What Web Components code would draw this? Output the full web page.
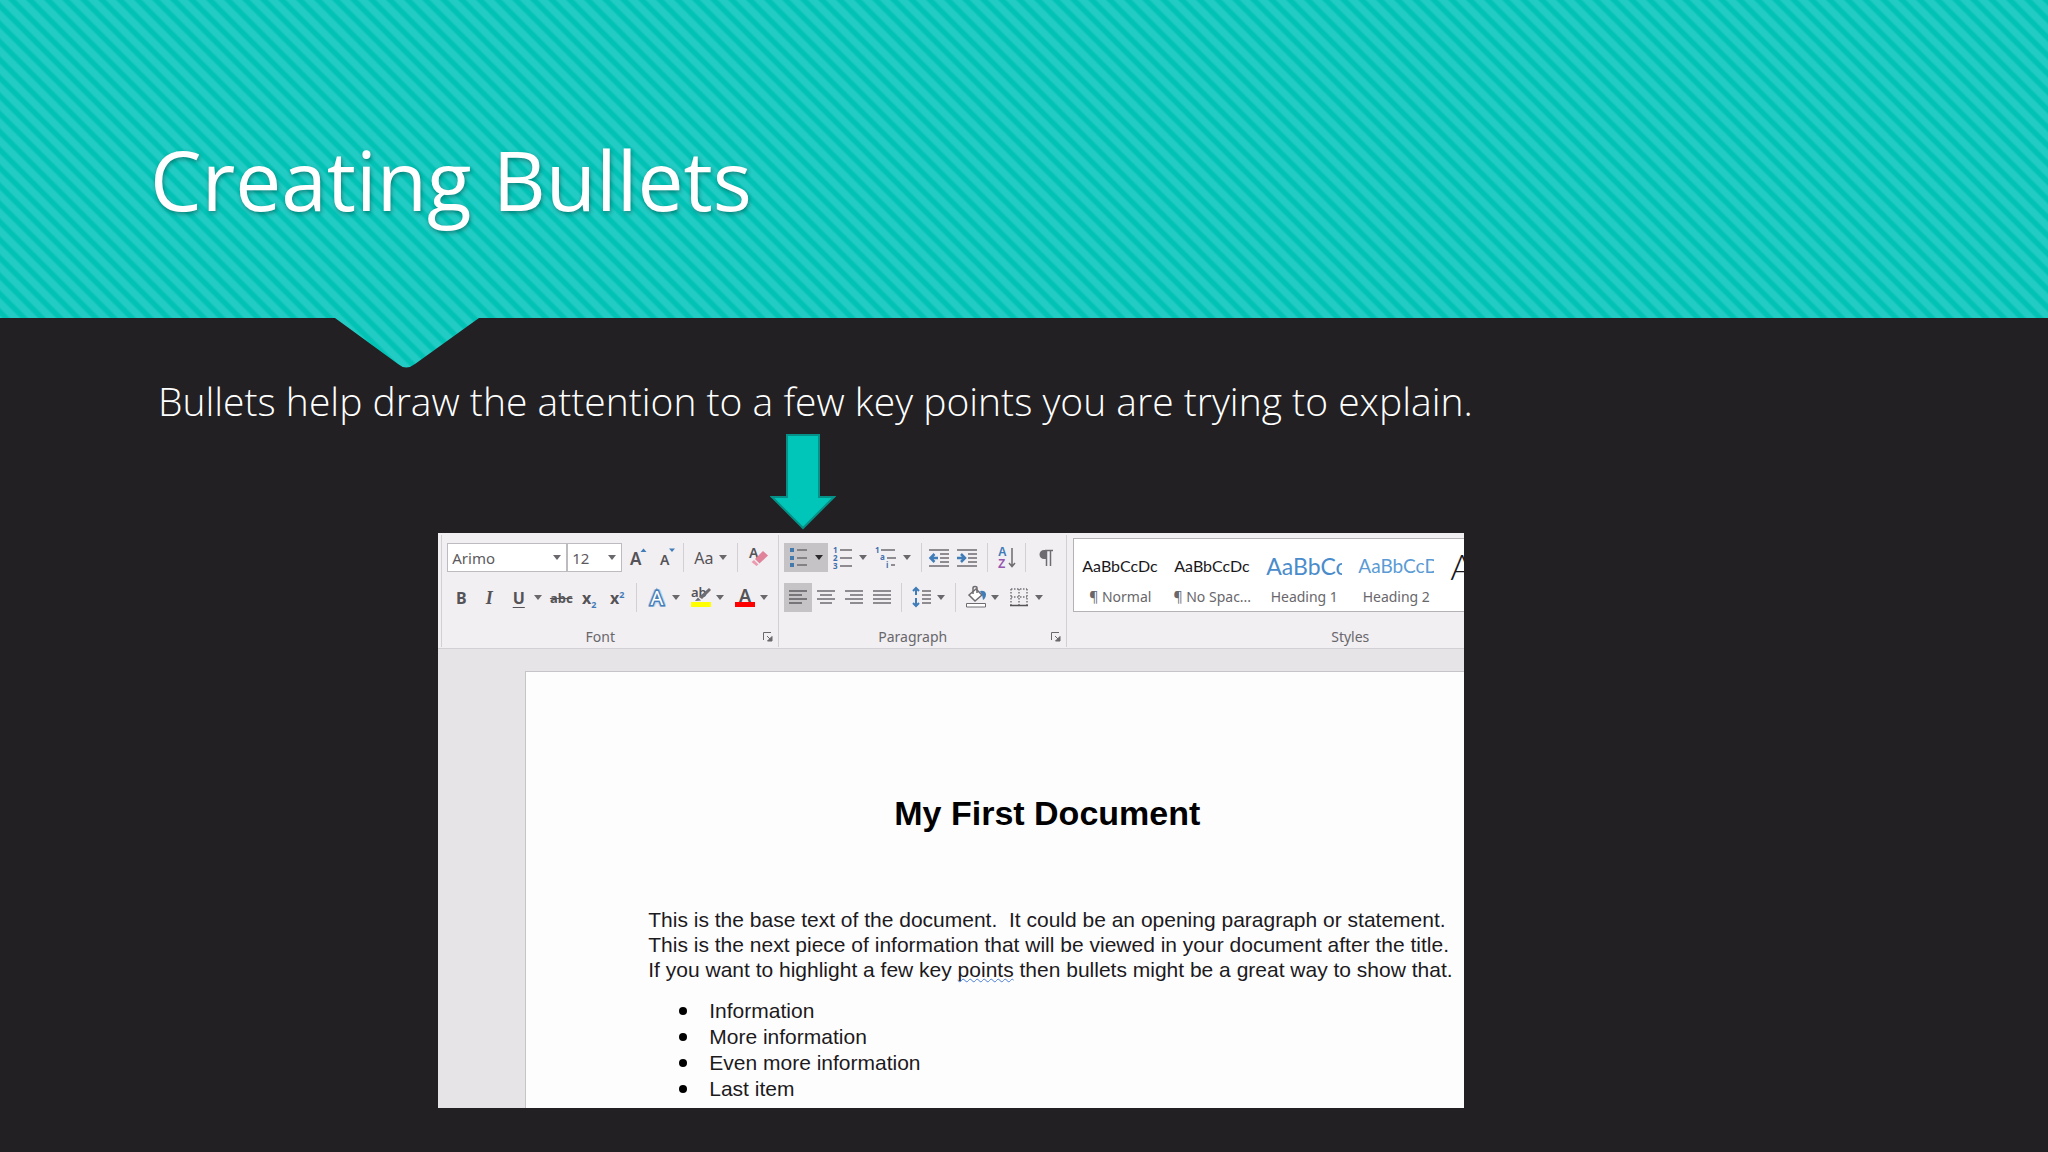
<!DOCTYPE html>
<html lang="en">
<head>
<meta charset="utf-8">
<title>Creating Bullets</title>
<style>
  html, body {
    margin: 0;
    min-height: 100%;
    background: #222023;
  }

  body {
    font-family: "Noto Sans", "Open Sans", sans-serif;
  }

  li {
    padding-left: 8px;
  }

  li::marker {
    color: #000;
    font-size: 25px;
  }
</style>
</head>
<body>
<lesson-slide>
  <slide-header slot="header">Creating Bullets</slide-header>
  <p>Bullets help draw the attention to a few key points you are trying to explain.</p>
  <down-arrow></down-arrow>
  <word-window>
    <word-ribbon slot="ribbon"></word-ribbon>
    <word-page>
      <span slot="title">My First Document</span>
      <span>This is the base text of the document.&nbsp; It could be an opening paragraph or statement.</span>
      <span>This is the next piece of information that will be viewed in your document after the title.</span>
      <span>If you want to highlight a few key <word-squiggle>points</word-squiggle> then bullets might be a great way to show that.</span>
      <ul slot="list">
        <li>Information</li>
        <li>More information</li>
        <li>Even more information</li>
        <li>Last item</li>
      </ul>
    </word-page>
  </word-window>
</lesson-slide>

<script>
// Attach an open shadow root and fill it
class BaseElement extends HTMLElement {
  constructor() {
    super();
    this.attachShadow({ mode: 'open' });
  }

  connectedCallback() {
    this.shadowRoot.innerHTML = this.template();
  }
}

class LessonSlide extends BaseElement {
  template() {
    return `
      <style>
        :host {
          display: block;
          color: #fff;
        }

        main {
          padding: 55px 0 40px;
        }

        ::slotted(p) {
          margin: 0 0 0 158px;
          font: 300 39px/56px "Open Sans", "Noto Sans", sans-serif;
        }

        ::slotted(down-arrow) {
          margin: 5px 0 2px 37.6%;
        }

        ::slotted(word-window) {
          margin-left: 21.4%;
          width: 50.1%;
        }
      </style>
      <slot name="header"></slot>
      <main><slot></slot></main>
    `;
  }
}

// Striped banner with a pointer under the title
class SlideHeader extends BaseElement {
  template() {
    return `
      <style>
        :host {
          --stripes: linear-gradient(45deg, #22cbc3 10%, #02c2b5 19% 31%, #22cbc3 40% 60%, #02c2b5 69% 81%, #22cbc3 90%);
          display: block;
          position: relative;
          padding: 119px 150px 79px;
          background: var(--stripes) 0 -3px / 18px 18px;
        }

        :host::after {
          content: "";
          position: absolute;
          top: 100%;
          left: 335px;
          width: 144px;
          height: 50px;
          background: var(--stripes) -335px -321px / 18px 18px;
          clip-path: path("M0 0H144L80 46Q71 53 63 46Z");
        }

        h1 {
          margin: 0;
          font: 400 82px/120px "Open Sans", "Noto Sans", sans-serif;
          text-shadow: 1px 2px 4px rgba(0, 0, 0, 0.35);
        }
      </style>
      <h1><slot></slot></h1>
    `;
  }
}

class DownArrow extends BaseElement {
  template() {
    return `
      <style>
        :host { display: block; }
        svg { display: block; }
      </style>
      <svg width="66" height="97" viewBox="0 0 66 97" fill="#00c6b9" stroke="#069188" stroke-width="2">
        <path d="M17 1H49V63H64L33 94L2 63H17Z"/>
      </svg>
    `;
  }
}

class WordWindow extends BaseElement {
  template() {
    return `
      <style>
        :host {
          display: block;
          overflow: hidden;
          background: #e6e4e7;
          color: #000;
        }

        .canvas {
          padding: 22px 0 0 87px;
        }
      </style>
      <slot name="ribbon"></slot>
      <div class="canvas"><slot></slot></div>
    `;
  }
}

class WordPage extends BaseElement {
  template() {
    return `
      <style>
        :host {
          display: block;
          padding: 117px 0 0 122px;
          border: 1px solid #c6c4c8;
          border-width: 1px 0 0 1px;
          background: #fefdfe;
          font: 21px/25px "Liberation Sans", Arial, sans-serif;
          color: #1c1a1d;
          white-space: nowrap;
        }

        h2 {
          margin: 0 0 70px 246px;
          font-size: 34px;
          line-height: 48px;
          color: #000;
        }

        p {
          display: flex;
          flex-direction: column;
          margin: 0 0 15px;
        }

        ::slotted(ul) {
          margin: 0;
          padding: 0 0 7px 53px;
          line-height: 25px;
        }
      </style>
      <h2><slot name="title"></slot></h2>
      <p><slot></slot></p>
      <slot name="list"></slot>
    `;
  }
}

class WordSquiggle extends BaseElement {
  template() {
    return `
      <style>
        :host {
          text-decoration: underline wavy #4a7fd6 1px;
          text-underline-offset: 1px;
          text-decoration-skip-ink: none;
        }
      </style><slot></slot>`;
  }
}

// Ribbon button; "menu" adds the caret, "active" the pressed look
class RibbonButton extends BaseElement {
  template() {
    const caret = this.hasAttribute('menu')
      ? '<svg class="caret" width="8" height="5" viewBox="0 0 8 5"><path d="M0 0H8L4 5Z"/></svg>'
      : '';
    return `
      <style>
        :host {
          display: block;
          width: 28px;
        }

        :host([menu]) {
          width: 44px;
        }

        button {
          display: flex;
          align-items: center;
          width: 100%;
          height: 29px;
          padding: 0;
          border: 0;
          background: none;
          color: #555357;
          font: 700 16px/24px "Noto Sans", "Open Sans", sans-serif;
        }

        :host([active]) button {
          background: #c5c3c6;
        }

        .icon {
          display: flex;
          flex: 1;
          justify-content: center;
        }

        .caret {
          flex: none;
          margin-right: 5px;
          fill: #6a686c;
        }

        :host([active]) .caret {
          fill: #2c2a2e;
        }
      </style>
      <button type="button" aria-label="${this.getAttribute('label')}">
        <span class="icon"><slot></slot></span>${caret}
      </button>
    `;
  }
}

class RibbonSelect extends BaseElement {
  template() {
    return `
      <style>
        :host {
          display: grid;
          align-items: center;
        }

        select, svg {
          grid-area: 1 / 1;
        }

        select {
          appearance: none;
          box-sizing: border-box;
          width: 100%;
          height: 29px;
          margin: 0;
          padding: 0 4px;
          border: 1px solid #bdbbbf;
          border-radius: 0;
          background: #fff;
          color: #5c5a5e;
          font: 15px/24px "Noto Sans", "Open Sans", sans-serif;
        }

        svg {
          justify-self: end;
          margin-right: 6px;
          fill: #6a686c;
          pointer-events: none;
        }
      </style>
      <select aria-label="${this.getAttribute('label')}">
        <option>${this.getAttribute('value')}</option>
      </select>
      <svg width="8" height="5" viewBox="0 0 8 5"><path d="M0 0H8L4 5Z"/></svg>
    `;
  }
}

class RibbonSeparator extends BaseElement {
  template() {
    return `
      <style>
        :host {
          display: flex;
          justify-content: center;
          width: 10px;
          height: 29px;
        }

        div { border-left: 1px solid #d2d0d4; }
      </style>
      <div></div>
    `;
  }
}

class RibbonGroup extends BaseElement {
  template() {
    const launcher = this.hasAttribute('launcher')
      ? `<button type="button" aria-label="${this.getAttribute('name')} settings">
          <svg width="10" height="10" viewBox="0 0 10 10" fill="none" stroke="#6a686c">
            <path d="M.5 8V.5H8M4 4L8 8"/><path d="M9 4.500V9H4.500Z" fill="#6a686c"/>
          </svg>
        </button>`
      : '';
    return `
      <style>
        :host {
          display: block;
          flex: none;
          box-sizing: border-box;
          padding: 8px 0 0 5px;
          border-right: 1px solid #d2d0d4;
        }

        footer {
          display: flex;
          align-items: center;
          margin-top: 15px;
          height: 20px;
          color: #69676b;
          font-size: 14px;
          line-height: 20px;
        }

        span {
          flex: 1;
          padding-right: 10px;
          text-align: center;
        }

        button {
          display: block;
          margin-right: 5px;
          padding: 0;
          border: 0;
          background: none;
        }

        svg { display: block; }
      </style>
      <slot></slot>
      <footer><span>${this.getAttribute('name')}</span>${launcher}</footer>
    `;
  }
}

// One entry of the style gallery
class StyleTile extends BaseElement {
  template() {
    return `
      <style>
        :host {
          display: block;
          flex: none;
          width: 92px;
        }

        button {
          display: block;
          width: 100%;
          padding: 0 8px;
          border: 0;
          background: none;
          color: #69676b;
          font: 14px/24px "Noto Sans", "Open Sans", sans-serif;
          white-space: nowrap;
        }

        .preview {
          display: block;
          overflow: hidden;
          height: 37px;
          line-height: 36px;
          text-align: left;
          color: var(--preview-color, #1a181b);
          font-family: Lato, Carlito, sans-serif;
          font-size: var(--preview-size, 16px);
          font-weight: var(--preview-weight, 400);
        }

        .name {
          display: flex;
          justify-content: center;
        }
      </style>
      <button type="button">
        <span class="preview"><slot></slot></span>
        <span class="name">${this.getAttribute('name')}</span>
      </button>
    `;
  }
}

class WordRibbon extends BaseElement {
  template() {
    return `
      <style>
        :host {
          display: flex;
          padding: 2px 0 0 3px;
          border-bottom: 1px solid #d2d0d4;
          background: #f1eff2;
          color: #555357;
        }

        ribbon-group { margin-bottom: 1px; }
        .font { width: 338px; border-left: 1px solid #d2d0d4; }
        .paragraph { width: 288px; }
        .styles { width: 572px; padding-top: 3px; }

        .row { display: flex; }
        .row + .row { margin-top: 11px; }

        .family { width: 120px; }
        .size { width: 55px; }
        svg { display: block; overflow: visible; }
        text { font-family: "Noto Sans", sans-serif; }
        .sort text { font-family: "Liberation Sans", sans-serif; }
        .plain { font-weight: 400; }
        .italic { font-family: "Liberation Serif", serif; font-style: italic; font-size: 18px; }
        .underline { text-decoration: underline; text-underline-offset: 3px; }
        .strike { font-size: 13px; text-decoration: line-through; }
        sub, sup { color: #3f7cb8; font-size: 9px; line-height: 0; }

        .gallery {
          display: flex;
          margin-left: 1px;
          padding: 9px 0 2px;
          border: 1px solid #b4b2b6;
          background: #fff;
          height: 61px;
        }

        .h1 { --preview-color: #4a8ccb; --preview-size: 23px; }
        .h2 { --preview-color: #5b9bd5; --preview-size: 19px; }
        .title { --preview-size: 36px; --preview-weight: 300; font-style: italic; }
      </style>

      <ribbon-group class="font" name="Font" launcher>
        <div class="row">
          <ribbon-select class="family" label="Font" value="Arimo"></ribbon-select>
          <ribbon-select class="size" label="Font size" value="12"></ribbon-select>
          <ribbon-button label="Grow font">
            <svg width="24" height="24" viewBox="0 0 24 24" fill="#555357">
              <text x="6" y="19" font-size="17" font-weight="600">A</text>
              <path d="M16.500 6L19.500 2.500L22.500 6Z" fill="#3f7cb8"/>
            </svg>
          </ribbon-button>
          <ribbon-button label="Shrink font">
            <svg width="24" height="24" viewBox="0 0 24 24" fill="#555357">
              <text x="8" y="19" font-size="14" font-weight="600">A</text>
              <path d="M17 2.500H23L20 6Z" fill="#3f7cb8"/>
            </svg>
          </ribbon-button>
          <ribbon-separator></ribbon-separator>
          <ribbon-button label="Change case" menu><span class="plain">Aa</span></ribbon-button>
          <ribbon-separator></ribbon-separator>
          <ribbon-button label="Clear formatting">
            <svg width="24" height="24" viewBox="0 0 24 24" fill="#555357">
              <text x="5" y="12" font-size="14" font-weight="600">A</text>
              <path d="M11 13L19 5L24 9.500L15.500 17.500Z" fill="#e0829a"/>
              <path d="M10 14L14.500 18.500L12.500 20L7.500 16Z" fill="#ec9cb0"/>
            </svg>
          </ribbon-button>
        </div>
        <div class="row">
          <ribbon-button label="Bold">B</ribbon-button>
          <ribbon-button label="Italic"><span class="italic">I</span></ribbon-button>
          <ribbon-button label="Underline" menu><span class="underline">U</span></ribbon-button>
          <ribbon-button label="Strikethrough"><span class="strike">abc</span></ribbon-button>
          <ribbon-button label="Subscript"><span>x<sub>2</sub></span></ribbon-button>
          <ribbon-button label="Superscript"><span>x<sup>2</sup></span></ribbon-button>
          <ribbon-separator></ribbon-separator>
          <ribbon-button label="Text effects" menu>
            <svg width="24" height="24" viewBox="0 0 24 24">
              <text x="12" y="19" text-anchor="middle" font-size="20" font-weight="600" fill="#fff" stroke="#b9d3ee" stroke-width="4" stroke-linejoin="round">A</text>
              <text x="12" y="19" text-anchor="middle" font-size="20" font-weight="400" fill="#fff" stroke="#4a80b8" stroke-width="3" paint-order="stroke">A</text>
            </svg>
          </ribbon-button>
          <ribbon-button label="Highlight colour" menu>
            <svg width="24" height="24" viewBox="0 0 24 24" fill="#555357">
              <text x="2" y="11" font-size="13" font-weight="600">ab</text>
              <path d="M20 2L22 4L13 13L10 11ZM9 11.500L12 14.500L6 15Z" fill="#6e6c70"/>
              <path d="M2 16H22V21H2Z" fill="#ff0"/>
            </svg>
          </ribbon-button>
          <ribbon-button label="Font colour" menu>
            <svg width="24" height="24" viewBox="0 0 24 24" fill="#555357">
              <text x="12" y="16" text-anchor="middle" font-size="18" font-weight="600">A</text>
              <path d="M2 16H22V21H2Z" fill="#f00"/>
            </svg>
          </ribbon-button>
        </div>
      </ribbon-group>

      <ribbon-group class="paragraph" name="Paragraph" launcher>
        <div class="row">
          <ribbon-button label="Bullets" menu active>
            <svg width="24" height="24" viewBox="0 0 24 24">
              <path d="M2 2H6V6H2ZM2 10H6V14H2ZM2 17H6V21H2Z" fill="#4479ad"/>
              <path d="M9 4H19M9 12H19M9 19H19" stroke="#6e6c70" stroke-width="1.500"/>
            </svg>
          </ribbon-button>
          <ribbon-button label="Numbering" menu>
            <svg width="24" height="24" viewBox="0 0 24 24">
              <g fill="#3f6fae" font-size="8" font-weight="700">
                <text x="1" y="7">1</text><text x="1" y="15">2</text><text x="1" y="23">3</text>
              </g>
              <path d="M8 4H20M8 12H20M8 20H20" stroke="#6e6c70" stroke-width="1.500"/>
            </svg>
          </ribbon-button>
          <ribbon-button label="Multilevel list" menu>
            <svg width="24" height="24" viewBox="0 0 24 24">
              <g fill="#3f6fae" font-size="8" font-weight="700">
                <text x="-1" y="7">1</text><text x="4" y="14">a</text><text x="10" y="22">i</text>
              </g>
              <path d="M5 4H19M11 12H20M15 19H19" stroke="#6e6c70" stroke-width="1.500"/>
            </svg>
          </ribbon-button>
          <ribbon-separator></ribbon-separator>
          <ribbon-button label="Decrease indent">
            <svg width="24" height="24" viewBox="0 0 24 24" fill="none" stroke="#6e6c70" stroke-width="1.500">
              <path d="M1 4H21M12 8H21M12 12H21M12 16H21M1 20H21"/>
              <path d="M10 12H3M6.500 8L2.500 12L6.500 16" stroke="#3f7cb8" stroke-width="2.500"/>
            </svg>
          </ribbon-button>
          <ribbon-button label="Increase indent">
            <svg width="24" height="24" viewBox="0 0 24 24" fill="none" stroke="#6e6c70" stroke-width="1.500">
              <path d="M1 4H21M12 8H21M12 12H21M12 16H21M1 20H21"/>
              <path d="M1 12H8M5 8L9 12L5 16" stroke="#3f7cb8" stroke-width="2.500"/>
            </svg>
          </ribbon-button>
          <ribbon-separator></ribbon-separator>
          <ribbon-button label="Sort">
            <svg class="sort" width="24" height="24" viewBox="0 0 24 24" font-size="12" font-weight="700">
              <text x="4" y="10" fill="#3f7cb8">A</text>
              <text x="4" y="22" fill="#9555b0">Z</text>
              <path d="M18 2V20M15 17L18 20.500L21 17" fill="none" stroke="#6e6c70" stroke-width="1.500"/>
            </svg>
          </ribbon-button>
          <ribbon-separator></ribbon-separator>
          <ribbon-button label="Show paragraph marks">
            <svg width="24" height="24" viewBox="0 0 24 24">
              <path d="M13 4.500H21" stroke="#6e6c70" stroke-width="1.500"/>
              <path d="M14 4H12A4 4 0 0 0 12 13H14Z" fill="#6e6c70"/>
              <path d="M14.500 4V20M18.500 4V20" stroke="#6e6c70" stroke-width="1.500"/>
            </svg>
          </ribbon-button>
        </div>
        <div class="row">
          <ribbon-button label="Align left" active>
            <svg width="24" height="24" viewBox="0 0 24 24" stroke="#5e5c60" stroke-width="1.500">
              <path d="M3 5H21M3 9H16M3 13H21M3 17H16"/>
            </svg>
          </ribbon-button>
          <ribbon-button label="Centre">
            <svg width="24" height="24" viewBox="0 0 24 24" stroke="#6e6c70" stroke-width="1.500">
              <path d="M3 5H21M6 9H18M3 13H21M6 17H18"/>
            </svg>
          </ribbon-button>
          <ribbon-button label="Align right">
            <svg width="24" height="24" viewBox="0 0 24 24" stroke="#6e6c70" stroke-width="1.500">
              <path d="M3 5H21M8 9H21M3 13H21M8 17H21"/>
            </svg>
          </ribbon-button>
          <ribbon-button label="Justify">
            <svg width="24" height="24" viewBox="0 0 24 24" stroke="#6e6c70" stroke-width="1.500">
              <path d="M3 5H21M3 9H21M3 13H21M3 17H21"/>
            </svg>
          </ribbon-button>
          <ribbon-separator></ribbon-separator>
          <ribbon-button label="Line spacing" menu>
            <svg width="24" height="24" viewBox="0 0 24 24" fill="none" stroke="#6e6c70" stroke-width="1.500">
              <path d="M12 5H21M12 9H21M12 13H21M12 17H21"/>
              <path d="M6 9V2M3 5L6 2L9 5M6 12V20M3 17L6 20L9 17" stroke="#3f7cb8" stroke-width="2"/>
            </svg>
          </ribbon-button>
          <ribbon-separator></ribbon-separator>
          <ribbon-button label="Shading" menu>
            <svg width="24" height="24" viewBox="0 0 24 24" fill="#fff" stroke="#6e6c70" stroke-width="1.500">
              <path d="M5 9L12 3L18 9L11 15Z"/>
              <path d="M9 8V2Q9 .5 11 .5Q13 .5 13 2V7" fill="none"/>
              <path d="M16 5Q21 4 22 8Q22 12 19 14Q19 9 16 5Z" fill="#3f7cb8" stroke="none"/>
              <path d="M2.500 17.500H21.500V21H2.500Z" stroke-width="1"/>
            </svg>
          </ribbon-button>
          <ribbon-button label="Borders" menu>
            <svg width="24" height="24" viewBox="0 0 24 24" fill="none" stroke="#77757a" stroke-width="1.500">
              <path d="M3 3H19M3 11H19M3 3V19M11 3V19M19 3V19" stroke-dasharray="1.500 1.500"/>
              <path d="M2 19.500H20" stroke="#555357"/>
            </svg>
          </ribbon-button>
        </div>
      </ribbon-group>

      <ribbon-group class="styles" name="Styles">
        <div class="gallery">
          <style-tile name="¶ Normal">AaBbCcDc</style-tile>
          <style-tile name="¶ No Spac...">AaBbCcDc</style-tile>
          <style-tile class="h1" name="Heading 1">AaBbCc</style-tile>
          <style-tile class="h2" name="Heading 2">AaBbCcD</style-tile>
          <style-tile class="title" name="">A</style-tile>
        </div>
      </ribbon-group>
    `;
  }
}

customElements.define('lesson-slide', LessonSlide);
customElements.define('slide-header', SlideHeader);
customElements.define('down-arrow', DownArrow);
customElements.define('word-window', WordWindow);
customElements.define('word-page', WordPage);
customElements.define('word-squiggle', WordSquiggle);
customElements.define('ribbon-button', RibbonButton);
customElements.define('ribbon-select', RibbonSelect);
customElements.define('ribbon-separator', RibbonSeparator);
customElements.define('ribbon-group', RibbonGroup);
customElements.define('style-tile', StyleTile);
customElements.define('word-ribbon', WordRibbon);
</script>
</body>
</html>
